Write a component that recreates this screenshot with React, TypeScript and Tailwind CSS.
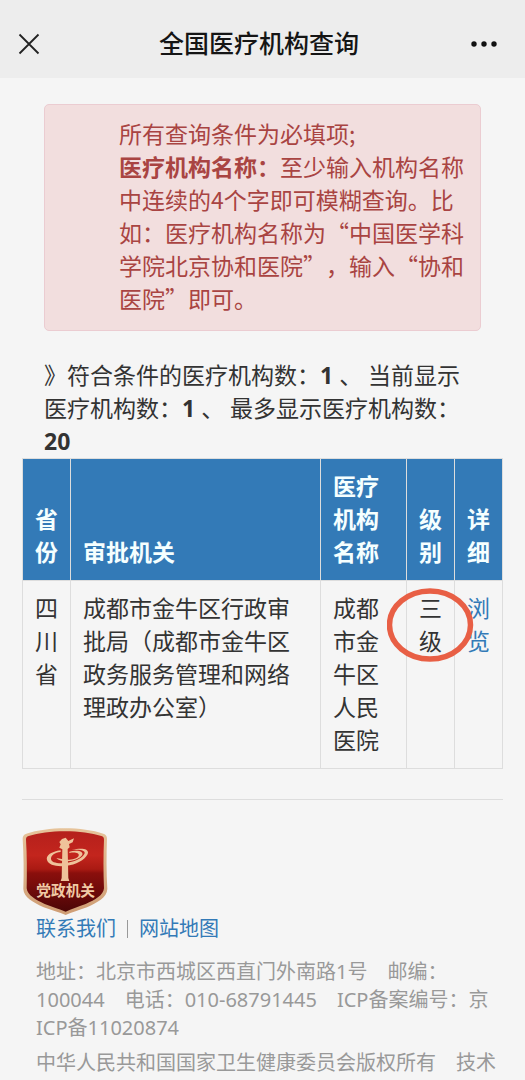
function CloseIcon() {
  return (
    <svg width="22" height="22" viewBox="0 0 22 22" fill="none" stroke="#222" strokeWidth="1.8" aria-hidden="true">
      <path d="M1.5 1.5 20.5 20.5M20.5 1.5 1.5 20.5" />
    </svg>
  );
}

function MoreIcon() {
  return (
    <svg width="28" height="8" viewBox="0 0 28 8" fill="#111" aria-hidden="true">
      <circle cx="5" cy="4" r="2.7" />
      <circle cx="15" cy="4" r="2.7" />
      <circle cx="25" cy="4" r="2.7" />
    </svg>
  );
}

function AgencyBadge() {
  return (
    <svg width="86" height="87" viewBox="23 24 258 261" role="img" aria-label="党政机关">
      <defs>
        <linearGradient id="badgeTop" x1="0" y1="0" x2="0" y2="1">
          <stop offset="0" stopColor="#b5201c" />
          <stop offset="0.3" stopColor="#c3251d" />
          <stop offset="0.47" stopColor="#aa1a13" />
          <stop offset="0.52" stopColor="#8a0f0c" />
          <stop offset="0.75" stopColor="#6d0a0a" />
          <stop offset="1" stopColor="#4b0606" />
        </linearGradient>
        <linearGradient id="badgeRim" x1="0" y1="0" x2="0" y2="1">
          <stop offset="0" stopColor="#e6c39a" />
          <stop offset="1" stopColor="#cf9d74" />
        </linearGradient>
      </defs>
      <path
        d="M152 25C194 25 236 31 267 41C275 44 278 48 278 56C276 105 276 155 279 207C278 232 250 247 218 262C194 271 172 277 154 285C135 277 112 271 88 262C57 247 28 232 27 207C29 155 28 105 25 56C25 48 28 44 36 41C68 31 110 25 152 25Z"
        fill="url(#badgeRim)"
      />
      <path
        d="M152 34C194 34 232 40 261 48C267 50 269 53 269 59C267 105 267 155 269 205C267 226 243 239 214 252C190 261 171 267 154 275C135 267 113 261 91 252C64 239 39 226 37 205C38 155 38 105 35 59C35 53 37 50 43 48C72 40 110 34 152 34Z"
        fill="url(#badgeTop)"
      />
      <g fill="#efc29a">
        <path d="M143 57L154 53L162 63L179 55L175 67L164 72L166 82L160 87L162 174L165 183H139L142 174L144 88L135 83L139 73L135 66Z" />
        <path d="M139 91C111 95 94 106 98 120C103 138 135 142 166 136C195 130 218 113 221 99C223 85 199 83 172 90C195 87 213 90 211 100C207 113 185 124 160 128C132 132 110 128 110 116C110 106 121 98 139 96Z" />
        <path d="M165 99C180 96 196 98 193 107C189 116 171 120 154 119L126 114C135 124 158 127 178 121C198 115 210 104 202 97C195 91 178 92 165 95Z" />
      </g>
      <text
        x="154"
        y="229"
        textAnchor="middle"
        fill="#f0c9a4"
        fontSize="44"
        className="font-['Noto_Sans_CJK_SC',sans-serif] font-bold"
      >
        党政机关
      </text>
    </svg>
  );
}

function Highlight() {
  return (
    <svg
      className="pointer-events-none absolute left-1/2 top-[6px] z-10 h-[76px] w-[88px] max-w-none -translate-x-1/2"
      viewBox="0 0 88 76"
      fill="none"
      stroke="#e85f45"
      strokeWidth="5.5"
      aria-hidden="true"
    >
      <ellipse cx="43" cy="38" rx="40.5" ry="34" />
    </svg>
  );
}

const head = "border border-[#ddd] px-3 py-[11px] text-left align-bottom font-bold";
const cell = "border border-[#ddd] px-3 py-[11px] text-left align-top";

export default function App() {
  return (
    <div className="min-h-screen bg-[#f5f5f5] font-['Noto_Sans','Noto_Sans_CJK_SC',sans-serif] text-[23px] leading-[33px] text-[#333] [text-spacing-trim:space-all]">
      <header className="flex h-[78px] items-center bg-[#ededed] pl-[18px] pr-7 pt-[9px]">
        <button type="button" aria-label="关闭" className="w-[31px]">
          <CloseIcon />
        </button>
        <h1 className="flex-1 text-center text-[25px] font-medium text-[#151515]">全国医疗机构查询</h1>
        <button type="button" aria-label="更多" className="w-7">
          <MoreIcon />
        </button>
      </header>

      <main className="px-[22px] pt-[26px]">
        <section className="mx-[22px] rounded-[5px] border border-[#ebccd1] bg-[#f2dede] pb-[15px] pl-[74px] pr-4 pt-3 font-['Noto_Sans_CJK_SC',sans-serif] text-[#a94442]">
          <p>所有查询条件为必填项;</p>
          <p>
            <strong>医疗机构名称：</strong>至少输入机构名称中连续的4个字即可模糊查询。比如：医疗机构名称为“中国医学科学院北京协和医院”，输入“协和医院”即可。
          </p>
        </section>

        <p className="mx-[22px] mt-7">
          》符合条件的医疗机构数：<b>1</b> 、 当前显示医疗机构数：<b>1</b> 、 最多显示医疗机构数：<b>20</b>
        </p>

        <table className="w-full table-fixed border-collapse">
          <colgroup>
            <col className="w-12" />
            <col />
            <col className="w-[86px]" />
            <col className="w-12" />
            <col className="w-12" />
          </colgroup>
          <thead className="bg-[#337ab7] text-[#f5ffff]">
            <tr>
              <th className={head}>省份</th>
              <th className={head}>审批机关</th>
              <th className={head}>医疗机构名称</th>
              <th className={head}>级别</th>
              <th className={head}>详细</th>
            </tr>
          </thead>
          <tbody>
            <tr>
              <td className={cell}>四川省</td>
              <td className={cell}>成都市金牛区行政审批局（成都市金牛区政务服务管理和网络理政办公室）</td>
              <td className={cell}>成都市金牛区人民医院</td>
              <td className="relative border border-[#ddd] px-3 py-[11px] text-left align-top">
                三级
                <Highlight />
              </td>
              <td className={cell}>
                <a href="#detail" className="text-[#337ab7]">浏览</a>
              </td>
            </tr>
          </tbody>
        </table>
      </main>

      <footer className="mx-[22px] mt-[30px] border-t border-[#ddd] pt-7 text-[20px] leading-7 text-[#999]">
        <AgencyBadge />
        <div className="pl-[14px]">
          <nav className="flex items-center gap-[11px]">
            <a href="#contact" className="text-[#337ab7]">联系我们</a>
            <span className="h-[18px] w-px bg-[#999]" />
            <a href="#sitemap" className="text-[#337ab7]">网站地图</a>
          </nav>
          <p className="mt-[15px]">地址：北京市西城区西直门外南路1号　邮编：100044　电话：010-68791445　ICP备案编号：京ICP备11020874</p>
          <p className="mt-[7px]">中华人民共和国国家卫生健康委员会版权所有　技术</p>
        </div>
      </footer>
    </div>
  );
}
